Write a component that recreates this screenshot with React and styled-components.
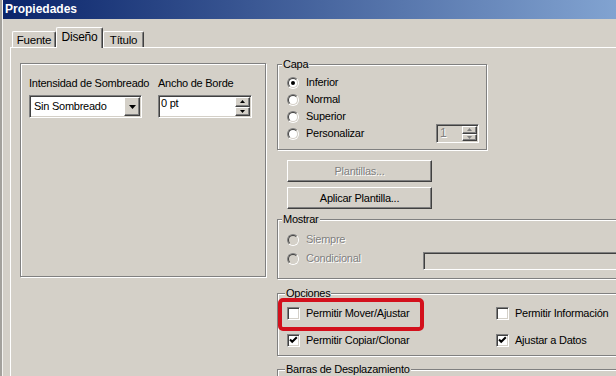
import React from 'react';
import styled, { createGlobalStyle, css } from 'styled-components';

const FACE = '#d4d0c8';

const GlobalStyle = createGlobalStyle`
  html, body { margin: 0; padding: 0; background: ${FACE}; }
  body { font-family: "Liberation Sans", Arial, sans-serif; font-size: 11px; letter-spacing: -0.25px; color: #000; }
  * { box-sizing: border-box; }
`;

const Window = styled.div`
  width: 616px;
  height: 376px;
  overflow: hidden;
  background: ${FACE};
  display: flex;
`;

const LeftEdge = styled.div`
  width: 3px;
  flex: none;
  background: linear-gradient(to right, #a3a19c 0 2px, #f4f3f0 2px 3px);
`;

const Main = styled.div`
  flex: 1;
  display: flex;
  flex-direction: column;
  min-width: 0;
`;

const TitleBar = styled.div`
  height: 19px;
  flex: none;
  padding-left: 2px;
  background: linear-gradient(90deg, #0a246a 0px, #a6caf0 800px);
  color: #fff;
  font-weight: bold;
  font-size: 12px;
  letter-spacing: 0;
  line-height: 19px;
  white-space: nowrap;
`;

const Body = styled.div`
  flex: 1;
  display: flex;
  flex-direction: column;
  padding: 8px 0 0 7px;
  min-height: 0;
`;

const TabRow = styled.div`
  display: flex;
  align-items: flex-end;
  height: 20px;
  padding-left: 2px;
  position: relative;
  z-index: 1;
`;

const Tab = styled.div`
  width: ${p => p.$w}px;
  height: ${p => (p.$active ? 21 : 16)}px;
  margin-bottom: ${p => (p.$active ? -1 : 0)}px;
  background: ${FACE};
  border-top: 1px solid #fff;
  border-left: 1px solid #fff;
  border-right: 1px solid #404040;
  box-shadow: inset -1px 0 #808080;
  border-top-left-radius: 2px;
  border-top-right-radius: 2px;
  display: flex;
  align-items: ${p => (p.$active ? 'flex-start' : 'center')};
  padding-top: ${p => (p.$active ? 3 : 1)}px;
  justify-content: center;
  font-size: ${p => (p.$active ? 12 : 11.5)}px;
  line-height: 13px;
  white-space: nowrap;
`;

const Panel = styled.div`
  flex: 1;
  width: 800px;
  border-top: 1px solid #fff;
  border-left: 1px solid #fff;
  padding: 15px 0 0 9px;
  display: grid;
  grid-template-columns: 246px 360px;
  column-gap: 11px;
  align-items: start;
`;

const Group = styled.div`
  position: relative;
  border: 1px solid #808080;
  box-shadow: 1px 1px 0 #fff, inset 1px 1px 0 #fff;
  width: ${p => p.$w}px;
  height: ${p => p.$h}px;
  margin-top: ${p => p.$mt || 0}px;
  padding: ${p => p.$pad || '0'};
`;

const GroupLabel = styled.span`
  position: absolute;
  top: -7px;
  left: ${p => p.$left || 4}px;
  padding: 0 1px;
  background: ${FACE};
  line-height: 13px;
  white-space: nowrap;
`;

const FieldGrid = styled.div`
  display: grid;
  grid-template-columns: 113px 94px;
  column-gap: 16px;
  row-gap: 5px;
  line-height: 13px;
  white-space: nowrap;
`;

const sunken = css`
  border: 1px solid;
  border-color: #808080 #fff #fff #808080;
  box-shadow: inset 1px 1px 0 #404040, inset -1px -1px 0 ${FACE};
`;

const raised = css`
  border: 1px solid;
  border-color: #fff #404040 #404040 #fff;
  box-shadow: inset -1px -1px 0 #808080;
  background: ${FACE};
`;

const Combo = styled.div`
  ${sunken};
  background: #fff;
  height: 23px;
  display: flex;
  padding: 1px;
`;

const ComboText = styled.span`
  flex: 1;
  padding-left: 3px;
  line-height: 19px;
`;

const DropButton = styled.div`
  ${raised};
  width: 16px;
  height: 19px;
  display: flex;
  align-items: center;
  justify-content: center;
`;

const SpinBox = styled.div`
  ${sunken};
  background: ${p => (p.$disabled ? FACE : '#fff')};
  width: ${p => p.$w}px;
  height: ${p => p.$h}px;
  display: flex;
  padding: 1px;
  flex: none;
`;

const SpinText = styled.span`
  flex: 1;
  padding-left: ${p => (p.$disabled ? 2 : 1)}px;
  line-height: ${p => (p.$disabled ? 15 : 13)}px;
  color: ${p => (p.$disabled ? '#808080' : '#000')};
  text-shadow: ${p => (p.$disabled ? '1px 1px 0 #fff' : 'none')};
  font-size: ${p => (p.$disabled ? 12 : 11)}px;
`;

const SpinButtons = styled.div`
  width: 15px;
  display: flex;
  flex-direction: column;
`;

const SpinButton = styled.div`
  ${raised};
  flex: 1;
  display: flex;
  align-items: center;
  justify-content: center;
`;

const RightColumn = styled.div`
  display: flex;
  flex-direction: column;
  margin-top: 1px;
`;

const Row = styled.div`
  display: flex;
  align-items: center;
  gap: ${p => p.$gap || 7}px;
  height: 17px;
  white-space: nowrap;
  line-height: 13px;
`;

const Stack = styled.div`
  display: flex;
  flex-direction: column;
  gap: ${p => p.$gap || 0}px;
`;

const Spacer = styled.div`
  flex: 1;
`;

const RadioOuter = styled.span`
  width: 12px;
  height: 12px;
  flex: none;
  border-radius: 50%;
  border: 1px solid;
  border-color: #808080 #fff #fff #808080;
  display: flex;
`;

const RadioInner = styled.span`
  flex: 1;
  border-radius: 50%;
  border: 1px solid;
  border-color: #404040 ${FACE} ${FACE} #404040;
  background: ${p => (p.$disabled ? FACE : '#fff')};
  display: flex;
  align-items: center;
  justify-content: center;
`;

const Dot = styled.span`
  width: 4px;
  height: 4px;
  border-radius: 50%;
  background: #000;
`;

const Label = styled.span`
  color: ${p => (p.$disabled ? '#808080' : '#000')};
  text-shadow: ${p => (p.$disabled ? '1px 1px 0 #fff' : 'none')};
`;

const PushButton = styled.div`
  ${raised};
  width: 145px;
  height: 22px;
  margin-left: 10px;
  margin-top: ${p => p.$mt}px;
  display: flex;
  align-items: center;
  justify-content: center;
  line-height: 13px;
  color: ${p => (p.$disabled ? '#808080' : '#000')};
  text-shadow: ${p => (p.$disabled ? '1px 1px 0 #fff' : 'none')};
`;

const MostrarGrid = styled.div`
  display: grid;
  grid-template-columns: 136px 1fr;
  grid-auto-rows: 17px;
  row-gap: 2px;
  align-items: center;
`;

const DisabledField = styled.div`
  ${sunken};
  background: ${FACE};
  height: 18px;
  align-self: start;
  margin-top: 2px;
`;

const OptionsGrid = styled.div`
  display: grid;
  grid-template-columns: 209px 1fr;
  grid-auto-rows: 17px;
  row-gap: 10px;
`;

const CheckBox = styled.span`
  ${sunken};
  width: 13px;
  height: 13px;
  flex: none;
  background: #fff;
  display: flex;
  align-items: center;
  justify-content: center;
`;

const Highlight = styled.div`
  position: absolute;
  left: 0;
  top: 4px;
  width: 146px;
  height: 33px;
  border: 4px solid #d3101c;
  border-radius: 5px;
  pointer-events: none;
`;

const Radio = ({ checked, disabled, children }) => (
  <Row>
    <RadioOuter>
      <RadioInner $disabled={disabled}>{checked && <Dot />}</RadioInner>
    </RadioOuter>
    <Label $disabled={disabled}>{children}</Label>
  </Row>
);

const Check = ({ checked, children }) => (
  <Row $gap={6}>
    <CheckBox>
      {checked && (
        <svg width="9" height="9" viewBox="0 0 9 9">
          <path d="M1 3.5 L3.2 5.8 L7.8 1.2" stroke="#000" strokeWidth="2" fill="none" />
        </svg>
      )}
    </CheckBox>
    <Label>{children}</Label>
  </Row>
);

const Arrow = ({ up, size = 3, color = '#000' }) => (
  <svg width={size * 2 - 1} height={size} viewBox={`0 0 ${size * 2 - 1} ${size}`}>
    <polygon
      points={up ? `${size - 0.5},0 0,${size} ${size * 2 - 1},${size}` : `0,0 ${size * 2 - 1},0 ${size - 0.5},${size}`}
      fill={color}
    />
  </svg>
);

const Spin = ({ value, w, h, disabled }) => (
  <SpinBox $w={w} $h={h} $disabled={disabled}>
    <SpinText $disabled={disabled}>{value}</SpinText>
    <SpinButtons>
      <SpinButton><Arrow up size={3} color={disabled ? '#808080' : '#000'} /></SpinButton>
      <SpinButton><Arrow size={3} color={disabled ? '#808080' : '#000'} /></SpinButton>
    </SpinButtons>
  </SpinBox>
);

export default function App() {
  return (
    <>
      <GlobalStyle />
      <Window>
        <LeftEdge />
        <Main>
          <TitleBar>Propiedades</TitleBar>
          <Body>
            <TabRow>
              <Tab $w={44}>Fuente</Tab>
              <Tab $w={47} $active>Diseño</Tab>
              <Tab $w={41}>Título</Tab>
            </TabRow>
            <Panel>
              <Group $w={246} $h={214} $pad="13px 0 0 8px">
                <FieldGrid>
                  <span>Intensidad de Sombreado</span>
                  <span>Ancho de Borde</span>
                  <Combo>
                    <ComboText>Sin Sombreado</ComboText>
                    <DropButton><Arrow size={4} /></DropButton>
                  </Combo>
                  <Spin value="0 pt" w={94} h={23} />
                </FieldGrid>
              </Group>

              <RightColumn>
                <Group $w={210} $h={86} $pad="9px 7px 0 9px">
                  <GroupLabel>Capa</GroupLabel>
                  <Stack>
                    <Radio checked>Inferior</Radio>
                    <Radio>Normal</Radio>
                    <Radio>Superior</Radio>
                    <Row>
                      <RadioOuter><RadioInner /></RadioOuter>
                      <Label>Personalizar</Label>
                      <Spacer />
                      <Spin value="1" w={43} h={19} disabled />
                    </Row>
                  </Stack>
                </Group>

                <PushButton $mt={10} $disabled>Plantillas...</PushButton>
                <PushButton $mt={5}>Aplicar Plantilla...</PushButton>

                <Group $w={360} $h={60} $mt={10} $pad="11px 0 0 9px">
                  <GroupLabel>Mostrar</GroupLabel>
                  <MostrarGrid>
                    <Radio disabled>Siempre</Radio>
                    <span />
                    <Radio disabled>Condicional</Radio>
                    <DisabledField />
                  </MostrarGrid>
                </Group>

                <Group $w={360} $h={63} $mt={14} $pad="11px 0 0 9px">
                  <GroupLabel $left={7}>Opciones</GroupLabel>
                  <OptionsGrid>
                    <Check>Permitir Mover/Ajustar</Check>
                    <Check>Permitir Información</Check>
                    <Check checked>Permitir Copiar/Clonar</Check>
                    <Check checked>Ajustar a Datos</Check>
                  </OptionsGrid>
                  <Highlight />
                </Group>

                <Group $w={360} $h={40} $mt={13}>
                  <GroupLabel $left={7}>Barras de Desplazamiento</GroupLabel>
                </Group>
              </RightColumn>
            </Panel>
          </Body>
        </Main>
      </Window>
    </>
  );
}
